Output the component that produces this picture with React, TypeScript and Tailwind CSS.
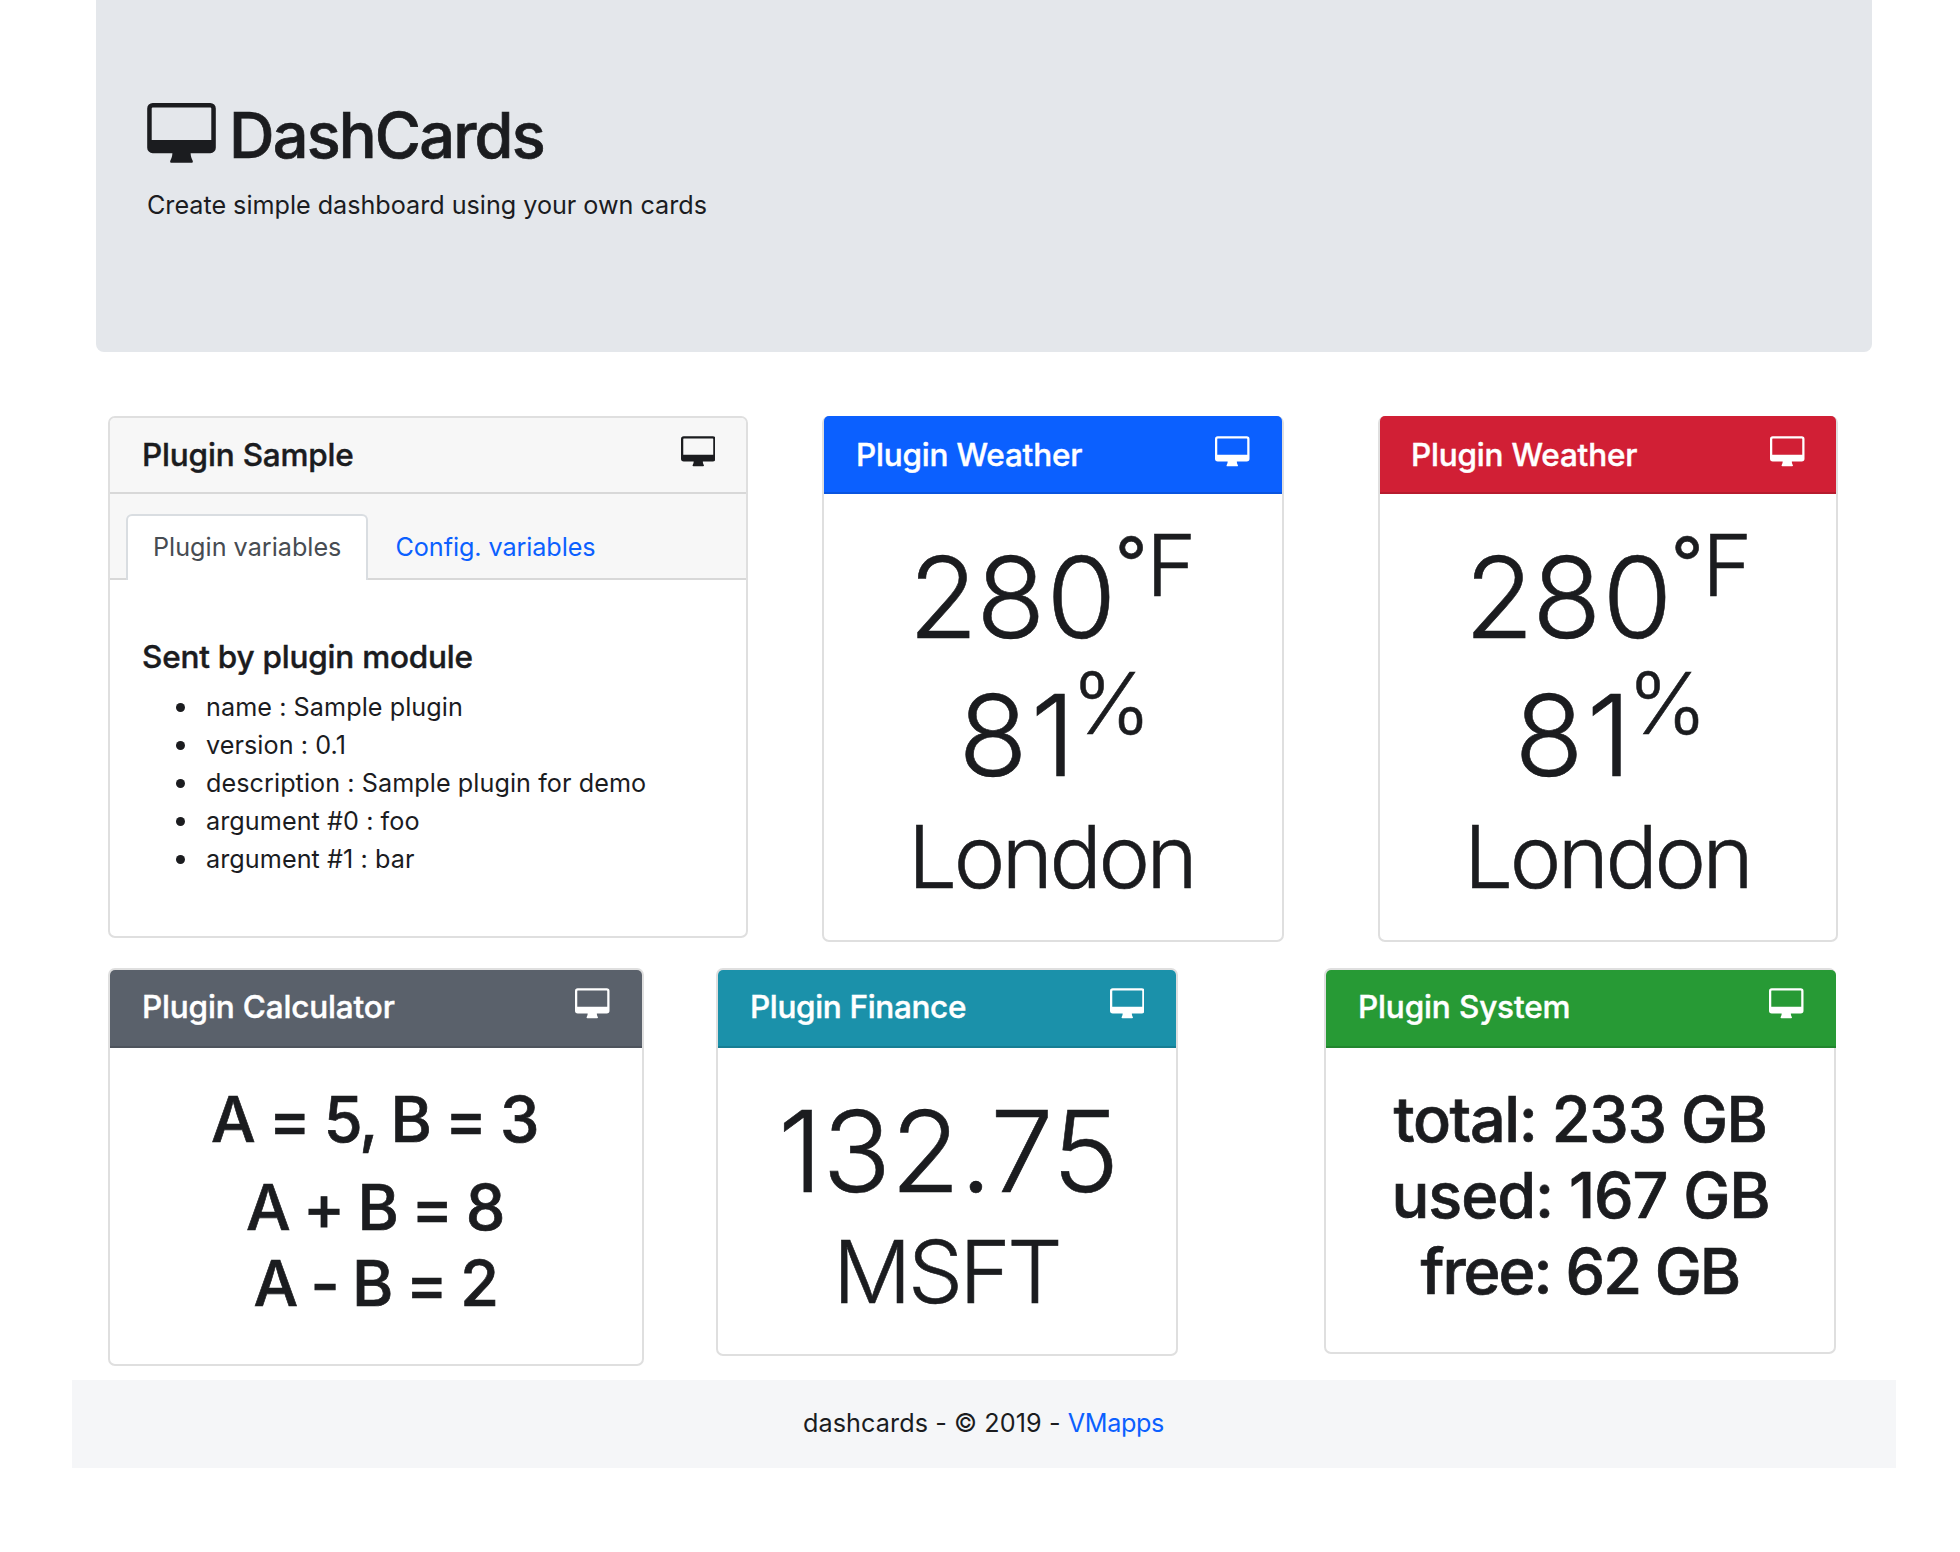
import type { ReactNode } from "react";

function Monitor({ className }: { className: string }) {
  return (
    <svg viewBox="0 0 68.6 60" className={className} fill="currentColor">
      <path
        fillRule="evenodd"
        d="M5.5 0H63.1A5.5 5.5 0 0 1 68.6 5.5V44.7A5.5 5.5 0 0 1 63.1 50.2H43.4C43.6 53.6 44.3 55.4 45.3 57.2C46.1 58.8 45.6 59.8 43.9 59.8H24.7C23 59.8 22.5 58.8 23.3 57.2C24.3 55.4 25 53.6 25.2 50.2H5.5A5.5 5.5 0 0 1 0 44.7V5.5A5.5 5.5 0 0 1 5.5 0ZM5.5 4.6A1 1 0 0 0 4.5 5.6V36.9H64.1V5.6A1 1 0 0 0 63.1 4.6Z"
      />
    </svg>
  );
}

type CardProps = {
  title: string;
  card: string;
  header: string;
  children: ReactNode;
};

function Card({ title, card, header, children }: CardProps) {
  return (
    <section className={`flex shrink-0 flex-col rounded-[7px] border-2 border-[#dfdfdf] bg-white ${card}`}>
      <header
        className={`flex shrink-0 items-start justify-between rounded-t-[5px] border-b-2 border-black/[.125] ${header}`}
      >
        <h5 className="text-[31.5px] leading-[73px] font-medium whitespace-nowrap [-webkit-text-stroke:0.4px_currentColor]">
          {title}
        </h5>
        <Monitor className="mt-[18px] h-[30.5px] w-[34.5px]" />
      </header>
      {children}
    </section>
  );
}

const variables = [
  "name : Sample plugin",
  "version : 0.1",
  "description : Sample plugin for demo",
  "argument #0 : foo",
  "argument #1 : bar",
];

function Weather() {
  return (
    <div className="pt-[34px] font-light whitespace-nowrap [-webkit-text-stroke:0.6px_#1b1c1f]">
      <div className="h-[138px] pl-[84.5px] text-[113px] leading-[138px]">
        <span className="tracking-[-1.7px]">2</span>
        <span className="tracking-[1.2px]">8</span>
        <span>0</span>
        <span className="relative -top-[51px] -ml-[1px] inline-block w-[31px] text-[70px] leading-[0] font-normal">°</span>
        <span className="relative -top-[42px] text-[85px] leading-[0]">F</span>
      </div>
      <div className="h-[138px] pl-[134.5px] text-[113px] leading-[138px]">
        <span className="tracking-[3.2px]">81</span>
        <span className="relative -top-[42px] -ml-[7px] text-[85px] leading-[0]">%</span>
      </div>
      <div className="pl-[84px] text-[87px] leading-[105px] tracking-[-3.46px]">London</div>
    </div>
  );
}

export default function App() {
  return (
    <div className="h-[1552px] w-[1960px] overflow-hidden bg-white font-['Inter',sans-serif] text-[25.2px] text-[#1b1c1f]">
      <div className="ml-[96px] h-[352px] w-[1776px] rounded-b-[8px] bg-[#e4e7eb] pt-[95px] pl-[51px]">
        <h1 className="flex h-[80px] items-start text-[63px] leading-[80px] font-medium tracking-[-1.8px] [-webkit-text-stroke:0.7px_currentColor]">
          <Monitor className="mt-[8px] h-[60px] w-[69px]" />
          <span className="ml-[13px]">DashCards</span>
        </h1>
        <p className="mt-[11px] leading-[38px] tracking-[-0.025px]">Create simple dashboard using your own cards</p>
      </div>

      <div className="flex h-[616px] items-start pt-[64px] pl-[108px]">
        <Card title="Plugin Sample" card="h-[522px] w-[640px]" header="h-[76px] bg-[#f7f7f7] pr-[31px] pl-[32px] tracking-[-0.18px]">
          <div className="flex h-[86px] border-b-2 border-black/[.125] bg-[#f7f7f7] pt-[20px] pl-[16px]">
            <div className="h-[66px] w-[242px] rounded-t-[6px] border-2 border-b-0 border-[#d9dde1] bg-white pl-[25px] leading-[62px] text-[#474c52]">
              Plugin variables
            </div>
            <div className="ml-[27.5px] pt-[2px] leading-[62px] tracking-[-0.08px] text-[#0b60ff]">Config. variables</div>
          </div>
          <h5 className="mt-[57px] pl-[32px] text-[31.5px] leading-[40px] font-medium tracking-[-0.22px] [-webkit-text-stroke:0.4px_currentColor]">
            Sent by plugin module
          </h5>
          <ul className="mt-[11px] leading-[38px] tracking-[0.06px]">
            {variables.map((v) => (
              <li key={v} className="flex items-center">
                <span className="mr-[21.5px] ml-[65.5px] size-[9px] rounded-full bg-[#1b1c1f]" />
                {v}
              </li>
            ))}
          </ul>
        </Card>
        <Card title="Plugin Weather" card="ml-[74px] h-[526px] w-[462px]" header="-mt-[2px] h-[78px] bg-[#0b60ff] pt-[2px] pr-[32.5px] pl-[32px] text-white tracking-[-0.2px]">
          <Weather />
        </Card>
        <Card title="Plugin Weather" card="ml-[94px] h-[526px] w-[460px]" header="-mt-[2px] h-[78px] bg-[#d11f35] pt-[2px] pr-[31.5px] pl-[31px] text-white tracking-[-0.2px]">
          <Weather />
        </Card>
      </div>

      <div className="flex h-[412px] items-start pl-[108px] text-[63px] leading-[76px]">
        <Card title="Plugin Calculator" card="h-[398px] w-[536px]" header="h-[78px] bg-[#5a616b] pr-[32.5px] pl-[32px] text-white tracking-[-0.16px]">
          <div className="pt-[33px] font-medium [-webkit-text-stroke:0.7px_currentColor]">
            <div className="pl-[101px] tracking-[-1.9px]">A = 5, B = 3</div>
            <div className="mt-[12px] pl-[136px] tracking-[-2.2px]">A + B = 8</div>
            <div className="pl-[143.5px] tracking-[-2.2px]">A - B = 2</div>
          </div>
        </Card>
        <Card title="Plugin Finance" card="ml-[72px] h-[388px] w-[462px]" header="h-[78px] bg-[#1b91aa] pr-[32px] pl-[32px] text-white tracking-[-0.34px]">
          <div className="pt-[34px] font-light [-webkit-text-stroke:0.6px_#1b1c1f]">
            <div className="pl-[60px] text-[113px] leading-[138px] tracking-[-0.08px]">132.75</div>
            <div className="pl-[115px] text-[87px] leading-[104px] tracking-[-3.4px]">MSFT</div>
          </div>
        </Card>
        <Card title="Plugin System" card="ml-[146px] h-[386px] w-[512px]" header="-mr-[2px] h-[78px] bg-[#279a35] pr-[32.5px] pl-[32px] text-white tracking-[-0.14px]">
          <div className="pt-[33px] font-medium [-webkit-text-stroke:0.7px_currentColor]">
            <div className="pl-[67.5px] tracking-[-1.4px]">total: 233 GB</div>
            <div className="pl-[65.5px] tracking-[-1.05px]">used: 167 GB</div>
            <div className="pl-[94.5px] tracking-[-2px]">free: 62 GB</div>
          </div>
        </Card>
      </div>

      <footer className="ml-[72px] h-[88px] w-[1824px] bg-[#f5f6f8] pr-[1px] text-center leading-[86px]">
        <span className="tracking-[0.08px]">dashcards - © 2019 - </span>
        <span className="tracking-[-0.36px] text-[#0b60ff]">VMapps</span>
      </footer>
    </div>
  );
}
